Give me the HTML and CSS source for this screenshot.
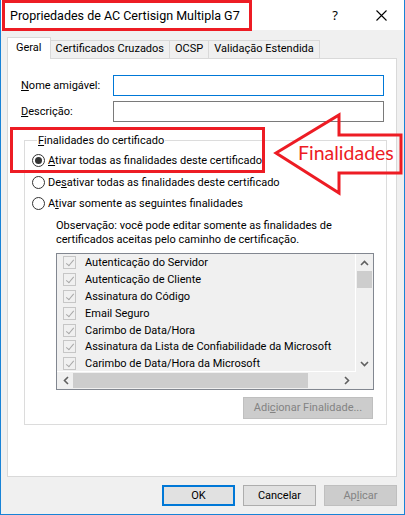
FILE: index.html
```html
<!DOCTYPE html>
<html lang="pt-BR">

<head>
    <meta charset="UTF-8">
    <meta name="viewport" content="width=device-width, initial-scale=1.0">
    <title>Propriedades de AC Certisign Multipla G7</title>
    <link rel="stylesheet" href="styles.css">
</head>

<body>
    <div class="window">
        <div class="titlebar">
            <span class="title">Propriedades de AC Certisign Multipla G7</span>
            <span class="caption-btn help">?</span>
            <span class="caption-btn close">
                <svg width="11" height="11" viewBox="0 0 11 11"><path d="M0.5 0.5 L10.5 10.5 M10.5 0.5 L0.5 10.5" stroke="#000" stroke-width="1.1" fill="none"/></svg>
            </span>
        </div>

        <div class="tabs">
            <div class="tab active">Geral</div>
            <div class="tab">Certificados Cruzados</div>
            <div class="tab">OCSP</div>
            <div class="tab">Validação Estendida</div>
        </div>

        <div class="panel">
            <div class="field">
                <label><u>N</u>ome amigável:</label>
                <div class="input focus"></div>
            </div>
            <div class="field">
                <label><u>D</u>escrição:</label>
                <div class="input"></div>
            </div>

            <fieldset class="group">
                <legend><u>F</u>inalidades do certificado</legend>
                <div class="radio checked"><span class="circle"></span><span><u>A</u>tivar todas as finalidades deste certificado</span></div>
                <div class="radio"><span class="circle"></span><span>De<u>s</u>ativar todas as finalidades deste certificado</span></div>
                <div class="radio"><span class="circle"></span><span>A<u>t</u>ivar somente as seguintes finalidades</span></div>

                <p class="note">Observação: você pode editar somente as finalidades de<br>certificados aceitas pelo caminho de certificação.</p>

                <div class="list">
                    <div class="items">
                        <div class="item"><span class="check"></span>Autenticação do Servidor</div>
                        <div class="item"><span class="check"></span>Autenticação de Cliente</div>
                        <div class="item"><span class="check"></span>Assinatura do Código</div>
                        <div class="item"><span class="check"></span>Email Seguro</div>
                        <div class="item"><span class="check"></span>Carimbo de Data/Hora</div>
                        <div class="item"><span class="check"></span>Assinatura da Lista de Confiabilidade da Microsoft</div>
                        <div class="item"><span class="check"></span>Carimbo de Data/Hora da Microsoft</div>
                    </div>
                    <div class="vscroll">
                        <svg class="chev" width="9" height="6" viewBox="0 0 9 6"><path d="M1 5 L4.5 1.5 L8 5" stroke="#606060" stroke-width="1.6" fill="none"/></svg>
                        <div class="vthumb"></div>
                        <div class="spacer"></div>
                        <svg class="chev" width="9" height="6" viewBox="0 0 9 6"><path d="M1 1 L4.5 4.5 L8 1" stroke="#606060" stroke-width="1.6" fill="none"/></svg>
                    </div>
                    <div class="hscroll">
                        <svg class="chev" width="6" height="9" viewBox="0 0 6 9"><path d="M5 1 L1.5 4.5 L5 8" stroke="#606060" stroke-width="1.6" fill="none"/></svg>
                        <div class="hthumb"></div>
                        <svg class="chev" width="6" height="9" viewBox="0 0 6 9"><path d="M1 1 L4.5 4.5 L1 8" stroke="#606060" stroke-width="1.6" fill="none"/></svg>
                    </div>
                    <div class="corner"></div>
                </div>

                <div class="add-row">
                    <button class="btn disabled wide">Adi<u>c</u>ionar Finalidade...</button>
                </div>
            </fieldset>
        </div>

        <div class="footer">
            <button class="btn default">OK</button>
            <button class="btn">Cancelar</button>
            <button class="btn disabled">Ap<u>l</u>icar</button>
        </div>

        <!-- annotations drawn over the dialog -->
        <div class="mark mark-title"></div>
        <div class="mark mark-group"></div>
        <svg class="arrow" width="405" height="515" viewBox="0 0 405 515">
            <polygon points="275,153 338,115 338,135 400,135 400,173 338,173 338,193" fill="none" stroke="#ed1c24" stroke-width="3" stroke-linejoin="miter"/>
        </svg>
        <span class="arrow-label">Finalidades</span>
    </div>
</body>

</html>
```

FILE: styles.css
```css
* {
    box-sizing: border-box;
}

body {
    margin: 0;
    font-family: Roboto, "Noto Sans", sans-serif;
    font-size: 11px;
    color: #000;
}

.window {
    position: relative;
    width: 405px;
    height: 515px;
    background: #f0f0f0;
    border: 1px solid #1883d7;
    border-top: none;
    overflow: hidden;
}

.titlebar {
    display: flex;
    align-items: center;
    height: 30px;
    background: #fff;
}

.title {
    padding-left: 9px;
    flex: 1;
    font-size: 12.5px;
}

.caption-btn {
    width: 46px;
    height: 30px;
    display: flex;
    align-items: center;
    justify-content: center;
}

.help {
    font-family: "Noto Sans", sans-serif;
    font-size: 13px;
}

.tabs {
    display: flex;
    align-items: flex-end;
    height: 21px;
    margin-top: 7px;
    padding-left: 6px;
}

.tab {
    height: 18px;
    line-height: 16px;
    padding: 0 5px;
    border: 1px solid #d9d9d9;
    border-bottom: none;
    margin-right: -1px;
    background: #f0f0f0;
}

.tab.active {
    position: relative;
    z-index: 1;
    height: 22px;
    line-height: 19px;
    margin-bottom: -1px;
    padding: 0 8px;
    background: #fff;
}

.panel {
    height: 419px;
    margin: 0 7px 0 6px;
    padding: 16px 12px 0 13px;
    background: #fff;
    border: 1px solid #d9d9d9;
}

.field {
    display: flex;
    align-items: center;
    margin-bottom: 5px;
}

.field label {
    width: 92px;
}

.input {
    width: 271px;
    height: 21px;
    border: 1px solid #7a7a7a;
}

.input.focus {
    border-color: #0078d7;
}

.group {
    margin: 11px -3px 0 3px;
    padding: 2px 12px 5px 7px;
    border: 1px solid #dcdcdc;
    min-width: 0;
}

.group legend {
    padding: 0 1px;
    margin-left: 5px;
    line-height: 15px;
}

.radio {
    display: flex;
    align-items: center;
    height: 21.5px;
}

.circle {
    flex-shrink: 0;
    width: 13px;
    height: 13px;
    border: 1px solid #333;
    border-radius: 50%;
    margin-right: 3px;
    display: flex;
    align-items: center;
    justify-content: center;
}

.radio.checked .circle::after {
    content: "";
    width: 7px;
    height: 7px;
    border-radius: 50%;
    background: #333;
}

.note {
    margin: 4px 0 0 24px;
    line-height: 14.5px;
}

.list {
    display: grid;
    grid-template-columns: 1fr 17px;
    grid-template-rows: 1fr 17px;
    width: 318px;
    height: 137px;
    margin: 5px 0 0 24px;
    border: 1px solid #828790;
    background: #f0f0f0;
}

.items {
    overflow: hidden;
    padding-top: 1px;
    border-right: 1px solid #fff;
    border-bottom: 1px solid #fff;
}

.item {
    display: flex;
    align-items: center;
    height: 16.8px;
    white-space: nowrap;
}

.check {
    flex-shrink: 0;
    position: relative;
    width: 13px;
    height: 13px;
    margin: 0 9px 0 6px;
    border: 1px solid #c6c6c6;
}

.check::after {
    content: "";
    position: absolute;
    left: 4px;
    top: 1px;
    width: 3px;
    height: 7px;
    border-right: 1px solid #a8a8a8;
    border-bottom: 1px solid #a8a8a8;
    transform: rotate(40deg);
}

.vscroll {
    display: flex;
    flex-direction: column;
    align-items: center;
    padding-top: 6px;
    padding-bottom: 5px;
}

.vthumb {
    width: 15px;
    height: 17px;
    margin-top: 5px;
    background: #cdcdcd;
}

.spacer {
    flex: 1;
}

.hscroll {
    display: flex;
    align-items: center;
    padding: 0 6px 0 6px;
}

.hthumb {
    width: 235px;
    height: 15px;
    margin-left: 4px;
    margin-right: auto;
    background: #cdcdcd;
}

.add-row {
    display: flex;
    justify-content: flex-end;
    margin-top: 7px;
    padding-right: 1px;
}

.btn {
    width: 73px;
    height: 21px;
    padding: 0;
    font: inherit;
    color: #000;
    background: #e1e1e1;
    border: 1px solid #adadad;
}

.btn.wide {
    width: 130px;
    height: 22px;
}

.btn.default {
    border: 2px solid #0078d7;
}

.btn.disabled {
    color: #838383;
    background: #cccccc;
    border-color: #bfbfbf;
}

.footer {
    display: flex;
    justify-content: flex-end;
    gap: 8px;
    margin-top: 8px;
    padding-right: 7px;
}

.mark {
    position: absolute;
    border: 3px solid #ed1c24;
}

.mark-title {
    left: 1px;
    top: 0;
    width: 250px;
    height: 31px;
}

.mark-group {
    left: 9px;
    top: 127px;
    width: 255px;
    height: 46px;
}

.arrow {
    position: absolute;
    left: 0;
    top: 0;
    pointer-events: none;
}

.arrow-label {
    position: absolute;
    left: 297px;
    top: 141px;
    font-family: Lato, "Liberation Sans", sans-serif;
    font-size: 19.5px;
    color: #ed1c24;
}
```
